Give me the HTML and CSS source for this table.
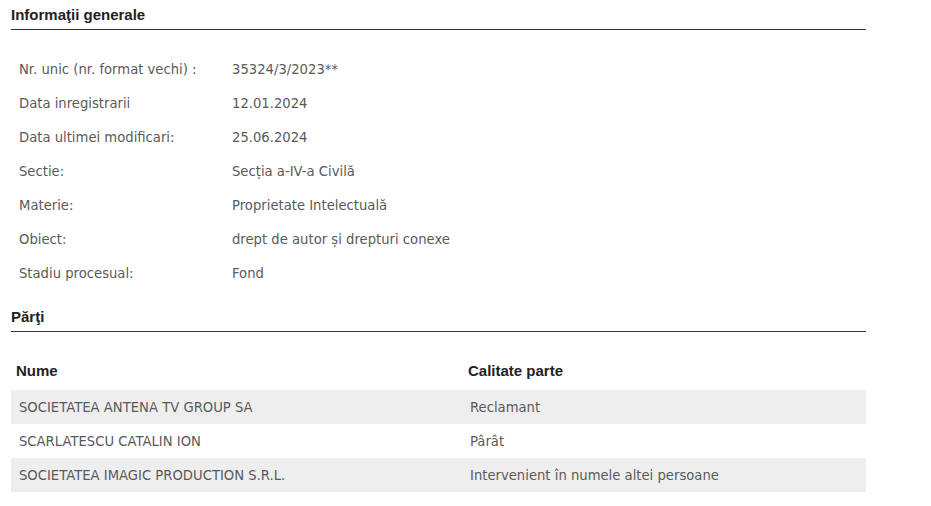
FILE: index.html
```html
<!DOCTYPE html>
<html lang="ro">
<head>
<meta charset="utf-8">
<title>Informaţii generale</title>
<link rel="stylesheet" href="styles.css">
</head>
<body>
<div class="page">
  <h2 class="section-title">Informaţii generale</h2>
  <table class="info">
    <tr><td class="label">Nr. unic (nr. format vechi) :</td><td>35324/3/2023**</td></tr>
    <tr><td class="label">Data inregistrarii</td><td>12.01.2024</td></tr>
    <tr><td class="label">Data ultimei modificari:</td><td>25.06.2024</td></tr>
    <tr><td class="label">Sectie:</td><td>Secția a-IV-a Civilă</td></tr>
    <tr><td class="label">Materie:</td><td>Proprietate Intelectuală</td></tr>
    <tr><td class="label">Obiect:</td><td>drept de autor și drepturi conexe</td></tr>
    <tr><td class="label">Stadiu procesual:</td><td>Fond</td></tr>
  </table>
  <h2 class="section-title second">Părţi</h2>
  <table class="parties">
    <thead>
      <tr><th class="col-name">Nume</th><th>Calitate parte</th></tr>
    </thead>
    <tbody>
      <tr class="odd"><td>SOCIETATEA ANTENA TV GROUP SA</td><td>Reclamant</td></tr>
      <tr><td>SCARLATESCU CATALIN ION</td><td>Pârât</td></tr>
      <tr class="odd"><td>SOCIETATEA IMAGIC PRODUCTION S.R.L.</td><td>Intervenient în numele altei persoane</td></tr>
    </tbody>
  </table>
</div>
</body>
</html>
```

FILE: styles.css
```css
html, body {
  margin: 0;
  padding: 0;
  background: #fff;
}

.page {
  width: 855px;
  margin-left: 11px;
}

.section-title {
  font-family: "Liberation Sans", Arial, sans-serif;
  font-weight: bold;
  font-size: 15px;
  line-height: 16px;
  color: #222;
  margin: 7px 0 0;
  padding: 0 0 6px;
  border-bottom: 1px solid #333;
}

.section-title.second {
  margin-top: 19px;
}

.info {
  border-collapse: collapse;
  margin-top: 22px;
  font-family: "DejaVu Sans", Tahoma, sans-serif;
  font-size: 13.2px;
  color: #5a5a5a;
}

.info td {
  height: 34px;
  padding: 0;
  vertical-align: middle;
}

.info td.label {
  width: 213px;
  padding-left: 8px;
}

.parties {
  width: 855px;
  border-collapse: collapse;
  margin-top: 22px;
}

.parties th {
  font-family: "Liberation Sans", Arial, sans-serif;
  font-weight: bold;
  font-size: 15px;
  color: #222;
  text-align: left;
  height: 32px;
  padding: 0 0 4px 5px;
  vertical-align: middle;
  box-sizing: content-box;
}

.parties th.col-name {
  width: 447px;
}

.parties td {
  font-family: "DejaVu Sans", Tahoma, sans-serif;
  font-size: 13.2px;
  color: #5a5a5a;
  height: 34px;
  padding: 0 0 0 8px;
  vertical-align: middle;
}

.parties td + td {
  padding-left: 7px;
}

.parties tr.odd td {
  background: #eeeeee;
}
```
